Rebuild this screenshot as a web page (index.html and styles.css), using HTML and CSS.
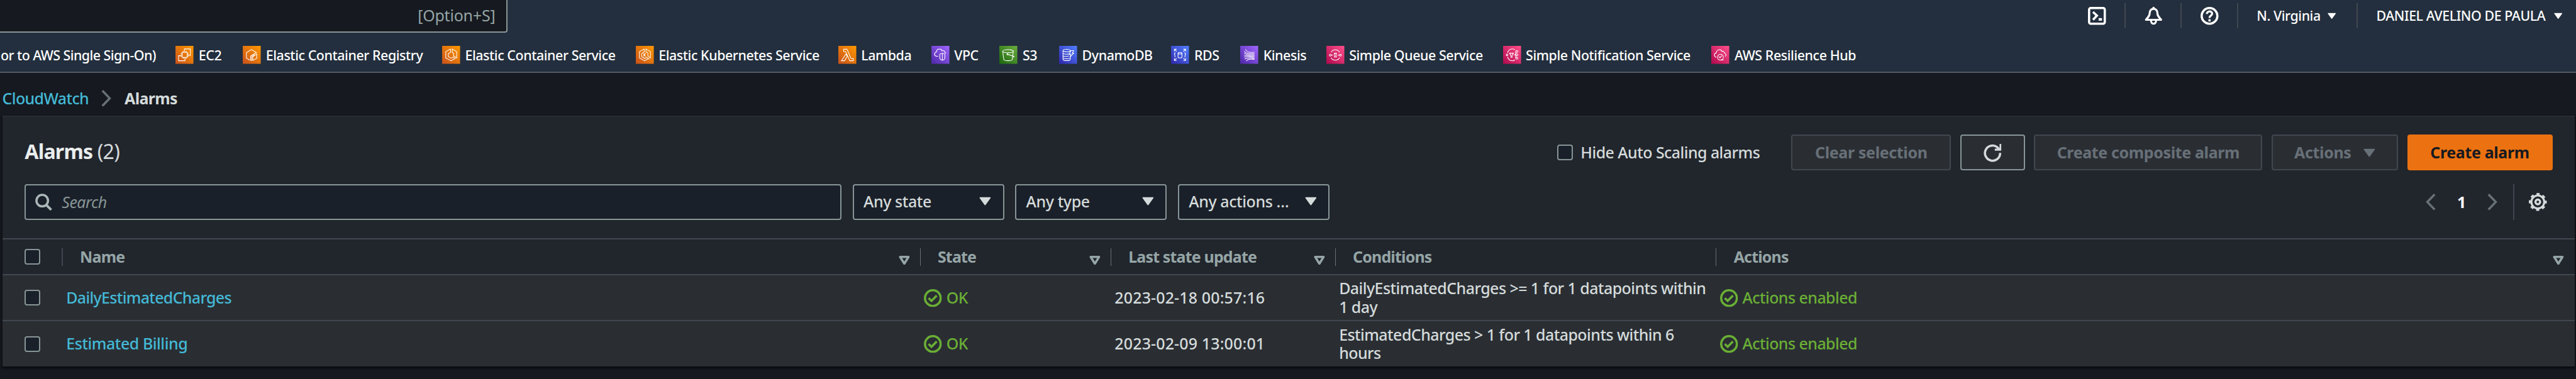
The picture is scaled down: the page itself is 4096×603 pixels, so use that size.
FILE: index.html
```
<!DOCTYPE html>
<html lang="en">
<head>
<meta charset="utf-8">
<title>CloudWatch Alarms</title>
<link rel="stylesheet" href="styles.css">
</head>
<body>
<svg class="defs" aria-hidden="true">
  <defs>
    <linearGradient id="orange" x1="0" y1="1" x2="1" y2="0"><stop offset="0" stop-color="#c8511b"/><stop offset="1" stop-color="#ff9900"/></linearGradient>
    <linearGradient id="purple" x1="0" y1="1" x2="1" y2="0"><stop offset="0" stop-color="#4d27a8"/><stop offset="1" stop-color="#a166ff"/></linearGradient>
    <linearGradient id="green" x1="0" y1="1" x2="1" y2="0"><stop offset="0" stop-color="#1b660f"/><stop offset="1" stop-color="#6cae3e"/></linearGradient>
    <linearGradient id="blue" x1="0" y1="1" x2="1" y2="0"><stop offset="0" stop-color="#2e27ad"/><stop offset="1" stop-color="#527fff"/></linearGradient>
    <linearGradient id="pink" x1="0" y1="1" x2="1" y2="0"><stop offset="0" stop-color="#b0084d"/><stop offset="1" stop-color="#ff4f8b"/></linearGradient>
    <symbol id="caret" viewBox="0 0 22 16"><path d="M1.5 1.5h19L11 14.5z" fill="currentColor" stroke="currentColor" stroke-width="2" stroke-linejoin="round"/></symbol>
    <symbol id="sort" viewBox="0 0 20 16"><path d="M2.5 2h15L10 14z" fill="none" stroke="currentColor" stroke-width="4" stroke-linejoin="round"/></symbol>
    <symbol id="ok" viewBox="0 0 32 32"><g fill="none" stroke="currentColor" stroke-width="4"><circle cx="16" cy="16" r="14"/><path d="M8.500 16l5 5 9.500-9.500"/></g></symbol>
    <symbol id="chev" viewBox="0 0 18 30"><path d="M2 1.500l13 13.500L2 28.500" fill="none" stroke="currentColor" stroke-width="4"/></symbol>
  </defs>
</svg>

<header class="topnav">
  <div class="utility">
    <div class="global-search">[Option+S]</div>
    <div class="tools">
      <svg class="tool" viewBox="0 0 32 32"><rect x="2" y="2" width="28" height="28" rx="3" fill="none" stroke="#fff" stroke-width="4"/><path d="M9 9l7 6.500L9 23" fill="none" stroke="#fff" stroke-width="4"/><rect x="19" y="20" width="6" height="4.500" fill="#fff"/></svg>
      <i class="rule"></i>
      <svg class="tool" viewBox="0 0 32 32"><g fill="none" stroke="#fff" stroke-width="3.600" stroke-linejoin="round"><path d="M16 3.500c-5 0-7 4-7 8.500 0 4.500-3 6-6.500 11h27C26 18 23 16.500 23 12c0-4.500-2-8.500-7-8.500zM16 0v4"/><path d="M11.500 24c0 8 9 8 9 0"/></g></svg>
      <i class="rule"></i>
      <svg class="tool" viewBox="0 0 32 32"><g fill="none" stroke="#fff"><circle cx="16" cy="16" r="14" stroke-width="4"/><path d="M11.300 12.500c0-6 9.400-6 9.400-.5 0 3.500-4.700 3.500-4.700 7.500" stroke-width="3.600"/></g><rect x="14" y="22" width="4" height="4" fill="#fff"/></svg>
      <i class="rule"></i>
      <div class="menu region">N. Virginia <svg class="mini"><use href="#caret"/></svg></div>
      <i class="rule"></i>
      <div class="menu account">DANIEL AVELINO DE PAULA <svg class="mini"><use href="#caret"/></svg></div>
    </div>
  </div>
  <nav class="favorites">
    <a class="first">or to AWS Single Sign-On)</a>
    <a><svg viewBox="0 0 32 32"><rect width="32" height="32" fill="url(#orange)"/><path d="M10 17.500H5.500v9H17v-4M16 9V5.500h10.500V17H23M12 11.500h9v9h-9zM14 9v2M16.500 9v2M19 9v2M14 21v2M16.500 21v2M19 21v2M9.500 13.500h2M9.500 16h2M9.500 18.500h2M21.500 13.500h2M21.500 16h2M21.500 18.500h2"/></svg>EC2</a>
    <a><svg viewBox="0 0 32 32"><rect width="32" height="32" fill="url(#orange)"/><path d="M12.500 25.500L6.500 21.500V12L15.500 6.500l9 5.500-7 4-3.500 2v7.500l2 .5V19l5-3.500M18 26v-6.500l7-5v7.500z"/></svg>Elastic Container Registry</a>
    <a><svg viewBox="0 0 32 32"><rect width="32" height="32" fill="url(#orange)"/><path d="M15 5.500L6.500 10.500v11L16 26.500l6-3.500M18 5.500l8 5v11L20.500 18v-4.500L18 11.500zM15 5.500v6l-4 2.500v5l5 3 3.500-2 4.500 3"/></svg>Elastic Container Service</a>
    <a><svg viewBox="0 0 32 32"><rect width="32" height="32" fill="url(#orange)"/><path d="M15 5.500L6.500 10.500v11L16 26.500l6-3.500M18 5.500l8 5v11L21.500 18v-5.500L18 10.500zM15 5.500v5l-4.500 3v6l5.500 3 3.500-2 4.500 3M14.500 13v6M18 13l-3.500 3 3.500 3"/></svg>Elastic Kubernetes Service</a>
    <a><svg viewBox="0 0 32 32"><rect width="32" height="32" fill="url(#orange)"/><path d="M9.500 6h6l7 16.500h4v4h-6L13 10H9.500zM13.500 14.500l-8 12H11l5-8z"/></svg>Lambda</a>
    <a><svg viewBox="0 0 32 32"><rect width="32" height="32" fill="url(#purple)"/><path d="M12 18.500H9C4.500 18 4.500 12 9 11c0-6.500 9-7 10-2 3-1.500 5 .5 5 3l2 1.500M19.500 13.500c2 0 4.500 1 4.500 2v6c0 2-2.500 4-4.500 4s-4.500-2-4.500-4v-6c0-1 2.500-2 4.500-2zv12"/></svg>VPC</a>
    <a><svg viewBox="0 0 32 32"><rect width="32" height="32" fill="url(#green)"/><ellipse cx="15.500" cy="9.500" rx="9.500" ry="2.700"/><path d="M6 9.500l2 15c1 2.700 14 2.700 15 0l2-15M14.500 15l11 3.500c1.500.5.500 2-1 1"/><circle cx="14.500" cy="15" r="1"/></svg>S3</a>
    <a><svg viewBox="0 0 32 32"><rect width="32" height="32" fill="url(#blue)"/><path d="M20 8.500c0 3-13 3-13 0s13-3 13 0M7 8.500v15.500c0 3 13 3 13 0v-4M7 13c0 2.200 9 2.200 11.500 1M7 17c0 2.200 8 2.200 10.500 1M7 21c0 2.200 10 2.200 12.500 1M21 8.500h5l-2.500 4.500H26l-6.500 7 1.500-5h-3z"/></svg>DynamoDB</a>
    <a><svg viewBox="0 0 32 32"><rect width="32" height="32" fill="url(#blue)"/><path d="M6 10V6h4M6 6l4 4M22 6h4v4M26 6l-4 4M6 22v4h4M6 26l4-4M22 26h4v-4M26 26l-4-4M8 12c-4 3 -1 3-1 4s-2 2 1 4M24 12c4 3 1 3 1 4s2 2-1 4"/><path d="M12.500 13v7c0 2 7 2 7 0v-7c0-2-7-2-7 0s7 2 7 0"/></svg>RDS</a>
    <a><svg viewBox="0 0 32 32"><rect width="32" height="32" fill="url(#purple)"/><path d="M9.500 6c2 6 7 5.500 16 5.500M7 9.500c4 5 8 4.500 18.500 4.500M7 13c5 3 8 3 15 3h3.500M7 16.500c5 1.500 9 1.500 18.500 1.500M7 20c5-1.500 9-1 18.500 0M8 23.500c4-3 8-2 17.500-1.500M11 27c2-3.500 6-3.500 14.500-3"/></svg>Kinesis</a>
    <a><svg viewBox="0 0 32 32"><rect width="32" height="32" fill="url(#pink)"/><path d="M8.500 11.500a8.500 8.500 0 0 1 15 0M8.500 21a8.500 8.500 0 0 0 15 0M13.500 13h5M13.500 20h5M14 13c1 2 1 5 0 7M18 13c-1 2-1 5 0 7M9 16.500h3M20 16.500h3"/><circle cx="7" cy="16.500" r="1.700"/><circle cx="25" cy="16.500" r="1.700"/></svg>Simple Queue Service</a>
    <a><svg viewBox="0 0 32 32"><rect width="32" height="32" fill="url(#pink)"/><path d="M8 12.500C10 5 17 4 21 7M8 19.500C10 27 17 28 21 25M11.500 13h7L16 17v3.500h-2V17zM19 16h3.500M22.500 10.500v11"/><circle cx="7" cy="16" r="1.500"/><circle cx="24.500" cy="10" r="1.800"/><circle cx="24.500" cy="16" r="1.800"/><circle cx="24.500" cy="22" r="1.800"/></svg>Simple Notification Service</a>
    <a><svg viewBox="0 0 32 32"><rect width="32" height="32" fill="url(#pink)"/><path d="M9 20.500C4.500 19 4.500 13.500 9 12.500c0-6 8.500-8 10-2.500 3-1 4.500.5 4.500 3 3 .5 3.500 4 1.500 6M19.500 24.500a5.300 5.300 0 1 1 2-3M13.500 19l2 2.500 3-4M17.500 24.500l3.500.5V22"/></svg>AWS Resilience Hub</a>
  </nav>
</header>

<main>
  <nav class="breadcrumb">
    <a>CloudWatch</a><svg><use href="#chev"/></svg><b>Alarms</b>
  </nav>

  <section class="panel">
    <div class="panel-head">
      <h1>Alarms <span>(2)</span></h1>
      <div class="actions">
        <label><i class="check"></i>Hide Auto Scaling alarms</label>
        <button class="btn off clear">Clear selection</button>
        <button class="btn refresh"><svg viewBox="0 0 32 32"><path d="M29.500 16A13.500 13.500 0 1 1 24 5.500l4 4" fill="none" stroke="currentColor" stroke-width="4"/><path d="M28.500 0h3v12H20V8.500h8.500z" fill="currentColor"/></svg></button>
        <button class="btn off composite">Create composite alarm</button>
        <button class="btn off more">Actions<svg class="caret"><use href="#caret"/></svg></button>
        <button class="btn primary">Create alarm</button>
      </div>
    </div>

    <div class="filters">
      <div class="field search"><svg viewBox="0 0 30 30"><circle cx="12.500" cy="12.500" r="10.300" fill="none" stroke="currentColor" stroke-width="4"/><path d="M19.500 20l9 9" stroke="currentColor" stroke-width="4.500"/></svg>Search</div>
      <div class="field select">Any state<svg class="caret"><use href="#caret"/></svg></div>
      <div class="field select">Any type<svg class="caret"><use href="#caret"/></svg></div>
      <div class="field select">Any actions …<svg class="caret"><use href="#caret"/></svg></div>
      <div class="pager">
        <svg class="arrow prev"><use href="#chev"/></svg>
        <b>1</b>
        <svg class="arrow"><use href="#chev"/></svg>
        <i></i>
        <svg class="gear" viewBox="0 0 32 32"><g fill="none" stroke="currentColor"><circle cx="16" cy="16" r="11.500" stroke-width="3.600"/><circle cx="16" cy="16" r="14.200" stroke-width="3.600" stroke-dasharray="5.580 5.573" stroke-dashoffset="2.790"/><circle cx="16" cy="16" r="4.200" stroke-width="3.800"/></g></svg>
      </div>
    </div>

    <div class="table">
      <div class="row head">
        <div><i class="check"></i></div>
        <div>Name<svg><use href="#sort"/></svg></div>
        <div>State<svg><use href="#sort"/></svg></div>
        <div>Last state update<svg><use href="#sort"/></svg></div>
        <div>Conditions</div>
        <div>Actions<svg><use href="#sort"/></svg></div>
      </div>
      <div class="row">
        <div><i class="check"></i></div>
        <div class="name">DailyEstimatedCharges</div>
        <div class="ok"><svg><use href="#ok"/></svg>OK</div>
        <div class="date">2023-02-18 00:57:16</div>
        <div class="cond">DailyEstimatedCharges &gt;= 1 for 1 datapoints within 1 day</div>
        <div class="ok"><svg><use href="#ok"/></svg>Actions enabled</div>
      </div>
      <div class="row">
        <div><i class="check"></i></div>
        <div class="name wide">Estimated Billing</div>
        <div class="ok"><svg><use href="#ok"/></svg>OK</div>
        <div class="date">2023-02-09 13:00:01</div>
        <div class="cond">EstimatedCharges &gt; 1 for 1 datapoints within 6 hours</div>
        <div class="ok"><svg><use href="#ok"/></svg>Actions enabled</div>
      </div>
    </div>
  </section>
</main>
</body>
</html>
```
FILE: styles.css
```
* { box-sizing: border-box; }
html { font-size: 8.9199px; }
body {
  margin: 0;
  height: 603px;
  overflow: hidden;
  background: #16191f;
  color: #d5dbdb;
  font: 500 2.8rem/3.3rem "Noto Sans", sans-serif;
  letter-spacing: -0.022em;
}
svg { display: block; flex: none; overflow: visible; }
.defs { position: absolute; width: 0; height: 0; }

/* Top navigation */
.topnav {
  height: 13rem;
  background: #232f3e;
  border-bottom: 2px solid #545b64;
  color: #fff;
  font-size: 2.4rem;
  letter-spacing: -0.02em;
}
.utility { display: flex; justify-content: space-between; height: 6.8rem; }
.global-search {
  display: flex;
  align-items: center;
  justify-content: flex-end;
  width: 90.5rem;
  height: 5.8rem;
  padding-right: 2rem;
  background: #16191f;
  border: 2px solid #879596;
  border-width: 0 2px 2px 0;
  border-radius: 0 0 4px 0;
  color: #95a5a6;
  font-size: 2.8rem;
  font-weight: 400;
  letter-spacing: -0.008em;
}
.tools { display: flex; align-items: center; height: 5.6rem; padding-right: 2.4rem; }
.tool { width: 3.2rem; height: 3.2rem; }
.rule { width: 2px; height: 4.4rem; margin: 0 3.3rem; background: #414750; }
.menu { display: flex; align-items: center; justify-content: space-between; white-space: nowrap; }
.region { width: 14.1rem; margin-right: 0.4rem; }
.account { width: 33.2rem; }
.mini { width: 1.5rem; height: 1.2rem; }

.favorites {
  display: grid;
  grid-template-columns: 31.3rem 12rem 35.5rem 34.5rem 36.1rem 16.6rem 12.2rem 10.6rem 20rem 12.3rem 15.3rem 31.5rem 37.2rem 30rem;
  height: 6rem;
}
.favorites a { display: flex; align-items: center; gap: 0.9rem; white-space: nowrap; }
.favorites svg { width: 3.2rem; height: 3.2rem; fill: none; stroke: #fff; stroke-width: 1.2; }
.favorites rect { stroke: none; }
.favorites .first { justify-content: flex-end; padding-right: 3.5rem; letter-spacing: -0.026em; }

/* Breadcrumb */
.breadcrumb { display: flex; align-items: center; height: 7.6rem; padding: 1.5rem 0 0 0.4rem; }
.breadcrumb a { width: 17.7rem; color: #44b9d6; letter-spacing: -0.025em; }
.breadcrumb svg { width: 1.8rem; height: 3rem; margin-right: 2.3rem; color: #687078; }
.breadcrumb b { letter-spacing: -0.025em; }

/* Alarm panel */
.panel {
  width: 458.6rem;
  height: 44.8rem;
  margin-left: 0.4rem;
  background: #21252c;
  border-top: 2px solid #2a2e33;
  box-shadow: 0 2px 3px 1px rgba(0, 0, 0, 0.55);
}
.panel-head {
  display: flex;
  align-items: center;
  justify-content: space-between;
  height: 6.4rem;
  margin: 3.2rem 4rem 0;
}
h1 { margin: 0; padding-bottom: 0.4rem; font-size: 3.6rem; letter-spacing: -0.025em; color: #eaeded; }
h1 span { font-weight: 400; color: #d5dbdb; }
.actions { display: flex; align-items: center; gap: 1.6rem; }
.actions label { display: flex; align-items: center; gap: 1.4rem; margin-right: 4rem; }
.check {
  display: block;
  flex: none;
  width: 2.8rem;
  height: 2.8rem;
  border: 2px solid #879596;
  border-radius: 4px;
  background: #1a2029;
}
.btn {
  display: flex;
  align-items: center;
  justify-content: center;
  height: 6.4rem;
  padding: 0;
  border: 2px solid #879596;
  border-radius: 4px;
  background: #2a2e33;
  color: #d5dbdb;
  font: 700 2.8rem/3.3rem "Noto Sans", sans-serif;
  letter-spacing: -0.014em;
}
.btn.off { border-color: #414750; color: #687078; }
.clear { width: 28.5rem; }
.refresh { width: 11.6rem; }
.refresh svg { width: 3.2rem; height: 3.2rem; }
.composite { width: 40.7rem; }
.more { width: 22.6rem; gap: 2.2rem; }
.btn.primary { width: 25.9rem; border-color: #ec7211; background: #ec7211; color: #16191f; }
.caret { width: 2.1rem; height: 1.6rem; }

.filters { display: flex; height: 6.4rem; margin: 2.4rem 4rem 3.3rem; }
.field {
  display: flex;
  align-items: center;
  border: 2px solid #879596;
  border-radius: 4px;
  background: #1a2029;
}
.search { width: 145.6rem; padding-left: 1.6rem; gap: 1.8rem; color: #879596; font-style: italic; font-weight: 400; letter-spacing: -0.02em; }
.search svg { width: 3rem; height: 3rem; color: #aab7b8; }
.select { width: 27rem; margin-left: 2rem; padding: 0 2.1rem 0.2rem 1.7rem; justify-content: space-between; white-space: nowrap; letter-spacing: -0.016em; }
.pager { display: flex; align-items: center; margin-left: auto; padding-right: 1rem; color: #687078; }
.pager b { width: 9.2rem; text-align: center; color: #fff; }
.arrow { width: 1.8rem; height: 3rem; }
.prev { transform: scaleX(-1); }
.pager i { width: 2px; height: 6.4rem; margin: 0 2.6rem 0 2.8rem; background: #414750; }
.gear { width: 3.2rem; height: 3.2rem; color: #d5dbdb; }

/* Alarm table */
.row {
  display: grid;
  grid-template-columns: 10.8rem 152.9rem 34rem 40rem 67.9rem 153rem;
  align-items: center;
  height: 8.2rem;
  border-top: 2px solid #414750;
  background: #2a2e33;
}
.row > div { padding-left: 0.6rem; }
.row > div:first-child { padding-left: 4rem; }
.row.head { height: 6.4rem; background: none; color: #95a5a6; font-weight: 700; letter-spacing: -0.033em; }
.head > div { display: flex; align-items: center; justify-content: space-between; height: 3.1rem; padding-right: 1.8rem; border-right: 1px solid #687078; }
.head > div + div { padding-left: 3.05rem; }
.head > div:first-child { border-right: 2px solid #414750; }
.head > div:last-child { border: 0; padding-right: 2rem; }
.head svg { width: 2rem; height: 1.6rem; margin-top: 1.2rem; }
.name { color: #44b9d6; letter-spacing: -0.027em; }
.wide { letter-spacing: -0.018em; }
.row > .ok { display: flex; align-items: center; gap: 0.8rem; padding-left: 0.6rem; color: #6aaf35; }
.ok svg { width: 3.2rem; height: 3.2rem; }
.date { letter-spacing: 0.006em; }
.row > .cond { padding-right: 1.2rem; }
```
